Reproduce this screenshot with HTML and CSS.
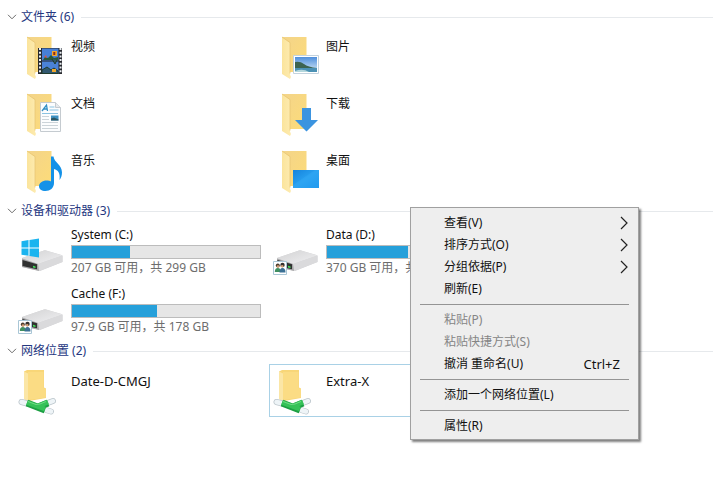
FILE: index.html
```html
<!DOCTYPE html>
<html lang="zh-CN">
<head>
<meta charset="utf-8">
<meta name="viewport" content="width=device-width, initial-scale=1">
<title>此电脑</title>
<link rel="stylesheet" href="styles.css">
</head>
<body>
<svg class="defs" aria-hidden="true">
  <defs>
    <linearGradient id="gold" x1="0" y1="0" x2="1" y2="1"><stop offset="0" stop-color="#f3d48a"/><stop offset="1" stop-color="#fddc79"/></linearGradient>
    <linearGradient id="flap" x1="0" y1="0" x2="1" y2="0"><stop offset="0" stop-color="#fbe49c"/><stop offset="1" stop-color="#fdebb0"/></linearGradient>
    <linearGradient id="metal" x1="0" y1="0" x2="1" y2="1"><stop offset="0" stop-color="#d2d2d3"/><stop offset="1" stop-color="#f0f0f2"/></linearGradient>
    <linearGradient id="sky" x1="0" y1="0" x2="0" y2="1"><stop offset="0" stop-color="#4f8fdc"/><stop offset="1" stop-color="#d9ecf8"/></linearGradient>
    <linearGradient id="screen" x1="0" y1="0" x2="1" y2="1"><stop offset="0" stop-color="#1583dc"/><stop offset=".5" stop-color="#28a0f0"/><stop offset="1" stop-color="#1691ea"/></linearGradient>
    <symbol id="folder" viewBox="0 0 48 48">
      <path d="M9 4h24.500v35H16z" fill="url(#gold)"/>
      <path d="M9 4l8 6v31.500L18 44l-1 2-8-5z" fill="url(#flap)"/>
      <path d="M9 4l8 5.500v31" fill="none" stroke="#e8c774" stroke-width=".8"/>
    </symbol>
    <symbol id="drive" viewBox="0 0 48 48">
      <path d="M4 31l22-7.500q1-.3 2 0l15.500 4.500q1 .3 1 1v6L22 44 4 40z" fill="#d3d3d5"/>
      <path d="M4 31l22-7.500q1-.3 2 0L44.500 28.500 20 37z" fill="url(#metal)"/>
      <path d="M20 37l24.500-8.500V35L21 44z" fill="#dadadc"/>
      <path d="M4 31.500l16 5.500 1 7L4 40z" fill="#a7a7a9"/>
      <path d="M4.500 33l14.500 4.300v5L4.500 39z" fill="#303131"/>
      <path d="M15 38.800l2.500.7v1.500l-2.500-.5z" fill="#43e45b"/>
    </symbol>
    <symbol id="shared" viewBox="0 0 48 48">
      <path d="M.5 34.500h13v13H.5z" fill="#fff" stroke="#a9c6d6"/>
      <circle cx="4.800" cy="38.500" r="2" fill="#4d3b2c"/><circle cx="9.500" cy="38" r="2.200" fill="#332f2d"/>
      <circle cx="5" cy="39.500" r="1.300" fill="#d3a077"/><circle cx="9.200" cy="39.300" r="1.300" fill="#d3a077"/>
      <path d="M1.800 45q0-4 3-4t3 4z" fill="#3f8f60"/><path d="M6.500 45.500q0-4.500 3-4.500t3 4.500z" fill="#3c7195"/>
    </symbol>
    <symbol id="netfolder" viewBox="0 0 48 48">
      <path d="M6 4.500L9 3h17v17.500l2 1V31l-17 3-5-2z" fill="#f8d678"/>
      <path d="M6 4.500l4 2V34l-4-2z" fill="#fbe6a6"/>
      <path d="M10 5h15.500v16l2.500 1v8.500L10 33z" fill="#fbdc84"/>
      <path d="M3.500 35l6 1.500M28 43l5 1.500M31 35.500l4-1.500" stroke="#bcc6cc" stroke-width="6" stroke-linecap="round"/>
      <path d="M3.500 35l6 1.500M28 43l5 1.500M31 35.500l4-1.500" stroke="#eef4f7" stroke-width="4.500" stroke-linecap="round"/>
      <path d="M9 36l18 7M19 40.500l11-4.500" fill="none" stroke="#1c9f43" stroke-width="7"/>
      <path d="M9 35.500l18 6.500M19 39.500l11-4.500" fill="none" stroke="#35c258" stroke-width="5"/>
      <path d="M10 34.500l8 3 4-.5 6-2.500" fill="none" stroke="#6fdb85" stroke-width="1"/>
    </symbol>
  </defs>
</svg>

<main class="explorer">
  <section class="group">
    <h2 class="group-title"><svg class="caret" viewBox="0 0 10 6" aria-hidden="true"><path d="M1 .8l4 4 4-4"/></svg>文件夹 (6)</h2>
    <div class="tiles">
      <a class="tile" href="#videos">
        <svg class="icon" viewBox="0 0 48 48" aria-hidden="true"><use href="#folder"/>
          <path d="M20 15h24v26H20z" fill="#27292e"/><path d="M24 15.500h16.500v12H24z" fill="#477fd5"/><path d="M24 28.500h16.500v12H24z" fill="#4b82d8"/>
          <path d="M22 15v26M42.500 15v26" stroke="#e9eef2" stroke-width="2" stroke-dasharray="2 1.700"/>
          <path d="M34 18h5v5h-5z" fill="#f2a72b"/><path d="M35.300 19h2v3h-2z" fill="#8c2b1b"/>
          <path d="M25 27l2-3 3 1 3-3 3 3 4-1v3z" fill="#27583d"/><path d="M26 24l2-2 1 3z" fill="#d85546"/>
          <path d="M34 26l3 5 2-4M24 37l5-3 4 3 3-2 4 3v2.500H24z" stroke="#213d2d" fill="#315870"/><path d="M34 36h4v3h-4z" fill="#efa72f"/>
        </svg><span class="name">视频</span></a>
      <a class="tile" href="#pictures">
        <svg class="icon" viewBox="0 0 48 48" aria-hidden="true"><use href="#folder"/>
          <path d="M20.500 22.500h25v18h-25z" fill="#fff" stroke="#c3d3de"/><path d="M22 24h22v15H22z" fill="url(#sky)"/>
          <path d="M22 29q5-1 9 2t13 4v1H22z" fill="#3c6450"/><path d="M22 35h22v4H22z" fill="#4b91b4"/><path d="M22 38q8-3 14 1H22z" fill="#b4d7dc"/>
        </svg><span class="name">图片</span></a>
      <a class="tile" href="#documents">
        <svg class="icon" viewBox="0 0 48 48" aria-hidden="true"><use href="#folder"/>
          <path d="M22.500 12.500h15l5 5v24h-20z" fill="#fcfdfe" stroke="#c5cbd0"/><path d="M37.500 12.500v5h5" fill="#e6e9ec" stroke="#c5cbd0"/>
          <path d="M24 21l4.500-6 1 6M26 19h3" fill="none" stroke="#328fc5" stroke-width="1.300"/>
          <path d="M31.500 17h5M31.500 20h9M24 23.500h16" stroke="#8bc3e2"/><path d="M24 26.500h7M24 29.500h7M24 32.500h16M24 35.500h16M24 38.500h16" stroke="#ccd4d9"/>
          <path d="M33 25.500h7.500v5H33z" fill="#3d91c2"/><path d="M33 28.500l3-1 4.500 2v1H33z" fill="#2c5662"/>
        </svg><span class="name">文档</span></a>
      <a class="tile" href="#downloads">
        <svg class="icon" viewBox="0 0 48 48" aria-hidden="true"><use href="#folder"/><path d="M29 18h9v12h7L33.500 41.500 22 30h7z" fill="#3b94e0"/></svg><span class="name">下载</span></a>
      <a class="tile" href="#music">
        <svg class="icon" viewBox="0 0 48 48" aria-hidden="true"><use href="#folder"/>
          <path d="M33 9.500h2.500c.5 6 8.500 8 8.500 16 0 3-1 5.500-2.500 7.500 1-7-1.500-10-5.500-11V36c0 5-4 8-8.500 8-4 0-6.500-2-6.500-4.800 0-3.200 3.500-5.700 7.500-5.700 1.800 0 3.500.4 4.500 1z" fill="#1492e8"/>
        </svg><span class="name">音乐</span></a>
      <a class="tile" href="#desktop">
        <svg class="icon" viewBox="0 0 48 48" aria-hidden="true"><use href="#folder"/><path d="M20 23h26v18H20z" fill="url(#screen)"/><path d="M20 38L42 23h4v18H20z" fill="#3bb0fa" opacity=".3"/></svg><span class="name">桌面</span></a>
    </div>
  </section>

  <section class="group">
    <h2 class="group-title"><svg class="caret" viewBox="0 0 10 6" aria-hidden="true"><path d="M1 .8l4 4 4-4"/></svg>设备和驱动器 (3)</h2>
    <div class="tiles drives">
      <a class="tile" href="#c">
        <svg class="icon" viewBox="0 0 48 48" aria-hidden="true"><use href="#drive"/><path d="M3.500 14.300l7-1.200v7.400h-7zM11.500 13l9.500-1.500v9h-9.500zM3.500 21.500h7v7.300l-7-1.100zM11.500 21.500H21v9L11.500 29z" fill="#1bb4ef"/></svg>
        <span class="details"><span class="drive-name">System (C:)</span><span class="bar"><span class="used" style="width:31%"></span></span><span class="space">207 GB 可用，共 299 GB</span></span></a>
      <a class="tile" href="#d">
        <svg class="icon" viewBox="0 0 48 48" aria-hidden="true"><use href="#drive"/><use href="#shared"/></svg>
        <span class="details"><span class="drive-name">Data (D:)</span><span class="bar"><span class="used" style="width:43%"></span></span><span class="space">370 GB 可用，共</span></span></a>
      <a class="tile" href="#f">
        <svg class="icon" viewBox="0 0 48 48" aria-hidden="true"><use href="#drive"/><use href="#shared"/></svg>
        <span class="details"><span class="drive-name">Cache (F:)</span><span class="bar"><span class="used" style="width:45%"></span></span><span class="space">97.9 GB 可用，共 178 GB</span></span></a>
    </div>
  </section>

  <section class="group">
    <h2 class="group-title"><svg class="caret" viewBox="0 0 10 6" aria-hidden="true"><path d="M1 .8l4 4 4-4"/></svg>网络位置 (2)</h2>
    <div class="tiles network">
      <a class="tile" href="#date"><svg class="icon" viewBox="0 0 48 48" aria-hidden="true"><use href="#netfolder"/></svg><span class="name">Date-D-CMGJ</span></a>
      <a class="tile selected" href="#extra"><svg class="icon" viewBox="0 0 48 48" aria-hidden="true"><use href="#netfolder"/></svg><span class="name">Extra-X</span></a>
    </div>
  </section>
</main>

<div class="menu" role="menu">
  <button class="item" role="menuitem">查看(V)<svg class="arrow" viewBox="0 0 8 14" aria-hidden="true"><path d="M1 1l6 6-6 6"/></svg></button>
  <button class="item" role="menuitem">排序方式(O)<svg class="arrow" viewBox="0 0 8 14" aria-hidden="true"><path d="M1 1l6 6-6 6"/></svg></button>
  <button class="item" role="menuitem">分组依据(P)<svg class="arrow" viewBox="0 0 8 14" aria-hidden="true"><path d="M1 1l6 6-6 6"/></svg></button>
  <button class="item" role="menuitem">刷新(E)</button>
  <hr class="separator">
  <button class="item" role="menuitem" disabled>粘贴(P)</button>
  <button class="item" role="menuitem" disabled>粘贴快捷方式(S)</button>
  <button class="item" role="menuitem">撤消 重命名(U)<span class="shortcut">Ctrl+Z</span></button>
  <hr class="separator">
  <button class="item" role="menuitem">添加一个网络位置(L)</button>
  <hr class="separator">
  <button class="item" role="menuitem">属性(R)</button>
</div>
</body>
</html>
```
FILE: styles.css
```css
* { box-sizing: border-box; }

body {
  margin: 0;
  background: #fff;
  color: #111;
  font: 12px/16px "Noto Sans", "Noto Sans CJK SC", sans-serif;
}

.defs { position: absolute; width: 0; height: 0; }

.explorer {
  display: flex;
  flex-direction: column;
  gap: 3px;
  padding: 6px 7px;
}

.group-title {
  display: flex;
  align-items: center;
  height: 22px;
  margin: 0 0 2px;
  color: #25377f;
  font-size: 12px;
  font-weight: 400;
}

.group-title::after {
  content: "";
  flex: 1;
  height: 1px;
  margin-left: 7px;
  background: #e6e9ec;
}

.caret {
  width: 10px;
  height: 6px;
  margin-right: 4px;
  fill: none;
  stroke: #6b6b6b;
}

.tiles {
  display: grid;
  grid-template-columns: repeat(auto-fill, 251px);
  gap: 4px;
  padding-left: 7px;
}

.drives { row-gap: 5px; }

.tile {
  display: flex;
  align-items: flex-start;
  gap: 5px;
  padding: 2px 3px 0;
  min-height: 53px;
  border: 1px solid transparent;
  color: inherit;
  text-decoration: none;
}

.selected { border-color: #a9d1e6; }

.icon { flex: none; width: 48px; height: 48px; }

.name { padding-top: 6px; }

.network .name { font-size: 13px; }

.details { display: flex; flex-direction: column; width: 190px; }

.bar {
  height: 14px;
  margin-top: 2px;
  border: 1px solid #bcbcbc;
  background: #e6e6e6;
}

.used { display: block; height: 100%; background: #26a0da; }

.space { color: #6d6d6d; line-height: 18px; white-space: nowrap; }

.menu {
  position: absolute;
  top: 207px;
  left: 410px;
  width: 229px;
  padding: 4px 2px 2px;
  border: 1px solid #a0a0a0;
  background: #eee;
  box-shadow: 2px 2px 2px rgba(0, 0, 0, .5);
}

.item {
  display: flex;
  align-items: center;
  justify-content: space-between;
  width: 100%;
  height: 22px;
  padding: 0 8px 0 31px;
  border: 0;
  background: none;
  color: #111;
  font: inherit;
}

.item:disabled { color: #858585; }

.arrow { width: 8px; height: 14px; fill: none; stroke: #222; stroke-width: 1.2; }

.shortcut { padding-right: 8px; font-size: 13px; }

.separator {
  height: 1px;
  margin: 4px 7px;
  border: 0;
  background: #949494;
}
```
